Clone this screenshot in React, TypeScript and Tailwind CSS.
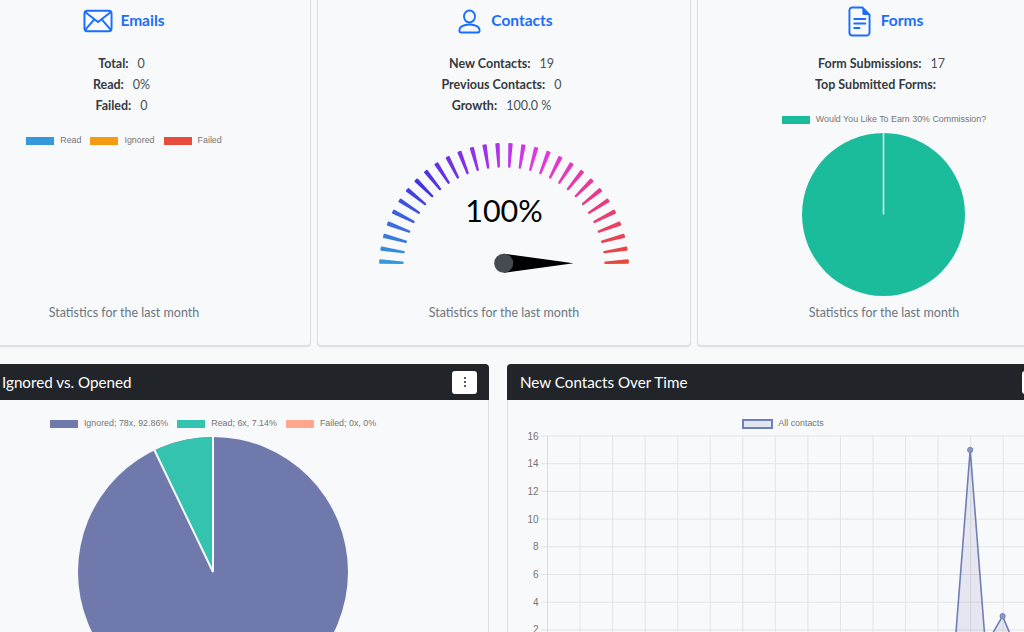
import React from 'react';

const GAUGE_STOPS: [number, number[]][] = [
  [0, [52, 152, 219]],
  [7, [66, 52, 224]],
  [14, [174, 50, 232]],
  [17, [224, 58, 230]],
  [23, [232, 58, 140]],
  [29, [231, 72, 60]],
];

function gaugeColor(k: number) {
  for (let i = 0; i < GAUGE_STOPS.length - 1; i++) {
    const [a, ca] = GAUGE_STOPS[i];
    const [b, cb] = GAUGE_STOPS[i + 1];
    if (k <= b) {
      const t = (k - a) / (b - a);
      const c = ca.map((v, j) => Math.round(v + (cb[j] - v) * t));
      return `rgb(${c[0]},${c[1]},${c[2]})`;
    }
  }
  return '#e74c3c';
}

function Gauge() {
  const cx = 504;
  const cy = 268;
  const ticks = Array.from({ length: 30 }, (_, k) => {
    const a = ((3 + 6 * k) * Math.PI) / 180;
    const ux = -Math.cos(a);
    const uy = -Math.sin(a);
    const nx = -uy;
    const ny = ux;
    const r1 = 124;
    const r2 = 101.5;
    const pts = [
      [cx + ux * r1 + nx * 1.2, cy + uy * r1 + ny * 1.2],
      [cx + ux * r1 - nx * 1.2, cy + uy * r1 - ny * 1.2],
      [cx + ux * r2 - nx * 0.2, cy + uy * r2 - ny * 0.2],
      [cx + ux * r2 + nx * 0.2, cy + uy * r2 + ny * 0.2],
    ];
    const color = gaugeColor(k);
    return (
      <polygon
        key={k}
        points={pts.map((p) => p.join(',')).join(' ')}
        fill={color}
        stroke={color}
        strokeWidth={2}
        strokeLinejoin="round"
      />
    );
  });
  return (
    <svg className="block" width="290" height="150" viewBox="359 130 290 150">
      {ticks}
      <text x="504" y="222" textAnchor="middle" fontSize="30.5" fill="#000" fontFamily="Lato, sans-serif">
        100%
      </text>
      <polygon points="504,253.8 573.5,263.3 504,272.8" fill="#000" />
      <circle cx="503.7" cy="263.3" r="9.5" fill="#464a52" />
    </svg>
  );
}

function LegendItem({ color, label }: { color: string; label: string }) {
  return (
    <div className="flex items-center gap-[6px]">
      <span className="block w-[28px] h-[8px]" style={{ backgroundColor: color }} />
      <span className="leading-[10px] pb-[2px]">{label}</span>
    </div>
  );
}

function Legend({ children, className }: { children: React.ReactNode; className: string }) {
  return (
    <div className={`flex justify-center gap-[9px] text-[8.9px] leading-[12px] text-[#757575] font-['Liberation_Sans',sans-serif] ${className}`}>
      {children}
    </div>
  );
}

function StatLine({ label, value }: { label: string; value?: string }) {
  return (
    <div className={`h-[21px] leading-[21px] text-center ${value ? 'pr-[5px]' : 'pr-[17px]'}`}>
      <span className="font-bold text-[#343a40]">{label}</span>
      {value && <span className="ml-[9px] text-[#495057]">{value}</span>}
    </div>
  );
}

function StatCard({ icon, title, children }: { icon: React.ReactNode; title: string; children: React.ReactNode }) {
  return (
    <div className="w-[374px] h-[366px] shrink-0 flex flex-col items-center bg-[#f8f9fb] border border-[#dcdfe3] rounded-[4px] shadow-[0_1px_1px_rgba(0,0,0,0.12)] pt-[25px] pb-[22px] text-[12.5px]">
      <div className="h-[30px] flex items-center gap-[7px]">
        {icon}
        <span className="text-[15.5px] font-bold text-[#1a6dfd]">{title}</span>
      </div>
      {children}
      <div className="mt-auto h-[21px] leading-[21px] text-[#6c757d]">Statistics for the last month</div>
    </div>
  );
}

function ChartCard({ title, children, titleClass }: { title: string; children: React.ReactNode; titleClass: string }) {
  return (
    <div className="w-[552px] h-[400px] shrink-0 bg-[#f8f9fb] border border-[#dcdfe3] rounded-t-[4px]">
      <div className={`h-[36px] -mx-px -mt-px flex items-center justify-between bg-[#212529] rounded-t-[4px] pr-[12px] ${titleClass}`}>
        <span className="text-[15.2px] text-white">{title}</span>
        <button className="w-[25px] h-[23px] flex flex-col items-center justify-center gap-[2px] bg-white rounded-[3px]">
          <span className="block w-[2px] h-[2px] rounded-full bg-[#212529]" />
          <span className="block w-[2px] h-[2px] rounded-full bg-[#212529]" />
          <span className="block w-[2px] h-[2px] rounded-full bg-[#212529]" />
        </button>
      </div>
      {children}
    </div>
  );
}

function IgnoredPie() {
  return (
    <svg className="block mx-auto mt-[5px]" width="274" height="274" viewBox="76 435 274 274">
      <circle cx="213" cy="572" r="135" fill="#6f79ac" />
      <path d="M213 572 L154.5 450.3 A135 135 0 0 1 213 437 Z" fill="#34c3ae" />
      <path d="M154.5 450.3 L213 572 L213 437" fill="none" stroke="#f8f9fb" strokeWidth="2" />
    </svg>
  );
}

function FormsPie() {
  return (
    <svg className="block mt-[6px]" width="166" height="166" viewBox="801 132 166 166">
      <circle cx="883.5" cy="214.5" r="81.5" fill="#1abc9c" />
      <line x1="883.5" y1="133" x2="883.5" y2="214.5" stroke="#d5ece7" strokeWidth="1.6" />
    </svg>
  );
}

const GRID_Y = [16, 14, 12, 10, 8, 6, 4, 2, 0];
const yOf = (v: number) => 436 + (16 - v) * 13.85;
const POINTS = Array.from({ length: 17 }, (_, i) => 547.5 + i * 32.55);

function LineChart() {
  const peakA = 'M954 657.6 L970.2 449.9 L986.4 657.6 Z';
  const peakB = 'M978.6 657.6 L1002.6 616.1 L1019.9 657.6 Z';
  return (
    <svg className="block" width="550" height="240" viewBox="508 430 550 240">
      {GRID_Y.map((v) => (
        <g key={v}>
          <line x1="541" x2="1058" y1={yOf(v)} y2={yOf(v)} stroke="#e3e4e6" strokeWidth="1" />
          <text x="538.5" y={yOf(v) + 3.5} textAnchor="end" fontSize="10" fill="#757575" fontFamily="Liberation Sans, sans-serif">
            {v}
          </text>
        </g>
      ))}
      {POINTS.map((x, i) => (
        <line key={i} x1={x} x2={x} y1="436" y2="665" stroke={i === 0 ? '#d9dadc' : '#e3e4e6'} strokeWidth="1" />
      ))}
      <path d={peakA} fill="rgba(111,121,172,0.14)" stroke="#6f7fb8" strokeWidth="1.6" strokeLinejoin="round" />
      <path d={peakB} fill="rgba(111,121,172,0.14)" stroke="#6f7fb8" strokeWidth="1.6" strokeLinejoin="round" />
      <circle cx="970.2" cy="449.9" r="2.6" fill="#8e98c4" stroke="#6f7fb8" strokeWidth="1" />
      <circle cx="1002.6" cy="616.1" r="2.6" fill="#8e98c4" stroke="#6f7fb8" strokeWidth="1" />
    </svg>
  );
}

export default function App() {
  return (
    <div className="w-[1024px] h-[632px] overflow-hidden bg-[#f8f9fb] font-['Lato','Noto_Sans',sans-serif]">
      <div className="-ml-[63px] -mt-[20px] w-[1140px]">
        <div className="flex gap-[6px]">
          <StatCard
            title="Emails"
            icon={
              <svg width="30" height="24" viewBox="0 0 31 24" fill="none" stroke="#1a6dfd" strokeWidth="2">
                <rect x="1.5" y="1.5" width="28" height="21" rx="3" />
                <path d="M2.5 3 L15.5 13 L28.5 3 M2.5 21 L11 11 M28.5 21 L20 11" strokeLinecap="round" />
              </svg>
            }
          >
            <div className="mt-[17px]">
              <StatLine label="Total:" value="0" />
              <StatLine label="Read:" value="0%" />
              <StatLine label="Failed:" value="0" />
            </div>
            <Legend className="mt-[19px]">
              <LegendItem color="#3498db" label="Read" />
              <LegendItem color="#f39c12" label="Ignored" />
              <LegendItem color="#e74c3c" label="Failed" />
            </Legend>
          </StatCard>
          <StatCard
            title="Contacts"
            icon={
              <svg className="mx-[3px]" width="23" height="25" viewBox="0 0 25 25" preserveAspectRatio="none" fill="none" stroke="#1a6dfd" strokeWidth="2">
                <circle cx="12.5" cy="7.5" r="6" />
                <path d="M3.5 23.5 H21.5 A2 2 0 0 0 23.5 21.5 C23.5 18 19 15.5 12.5 15.5 C6 15.5 1.5 18 1.5 21.5 A2 2 0 0 0 3.5 23.5 Z" />
              </svg>
            }
          >
            <div className="mt-[17px]">
              <StatLine label="New Contacts:" value="19" />
              <StatLine label="Previous Contacts:" value="0" />
              <StatLine label="Growth:" value="100.0 %" />
            </div>
            <div className="mt-[14px]">
              <Gauge />
            </div>
          </StatCard>
          <StatCard
            title="Forms"
            icon={
              <svg className="mx-[3px]" width="23" height="31" viewBox="0 0 24 31" preserveAspectRatio="none" fill="none" stroke="#1a6dfd" strokeWidth="2">
                <path d="M4 1.5 H15 L22.5 9 V26.5 A3 3 0 0 1 19.5 29.5 H4 A3 3 0 0 1 1.5 26.5 V4 A3 3 0 0 1 4 1.5 Z" />
                <path d="M15 1.5 L22.5 9 H16.5 A1.5 1.5 0 0 1 15 7.5 Z" fill="#1a6dfd" stroke="none" />
                <path d="M6.5 13 H18 M6.5 17.5 H18 M6.5 22 H12" strokeLinecap="round" />
              </svg>
            }
          >
            <div className="mt-[17px]">
              <StatLine label="Form Submissions:" value="17" />
              <StatLine label="Top Submitted Forms:" />
            </div>
            <Legend className="mt-[19px]">
              <LegendItem color="#1abc9c" label="Would You Like To Earn 30% Commission?" />
            </Legend>
            <FormsPie />
          </StatCard>
        </div>
        <div className="flex gap-[18px] mt-[18px]">
          <ChartCard title="Ignored vs. Opened" titleClass="pl-[65px]">
            <Legend className="mt-[18px]">
              <LegendItem color="#6f79ac" label="Ignored; 78x, 92.86%" />
              <LegendItem color="#34c3ae" label="Read; 6x, 7.14%" />
              <LegendItem color="#ffa78c" label="Failed; 0x, 0%" />
            </Legend>
            <IgnoredPie />
          </ChartCard>
          <ChartCard title="New Contacts Over Time" titleClass="pl-[13px]">
            <Legend className="mt-[18px]">
              <div className="flex items-center gap-[5px]">
                <span className="block w-[31px] h-[10px] border-2 border-[#6f7fb8] bg-[#e2e5ef]" />
                <span className="leading-[10px] pb-[2px]">All contacts</span>
              </div>
            </Legend>
            <LineChart />
          </ChartCard>
        </div>
      </div>
    </div>
  );
}
